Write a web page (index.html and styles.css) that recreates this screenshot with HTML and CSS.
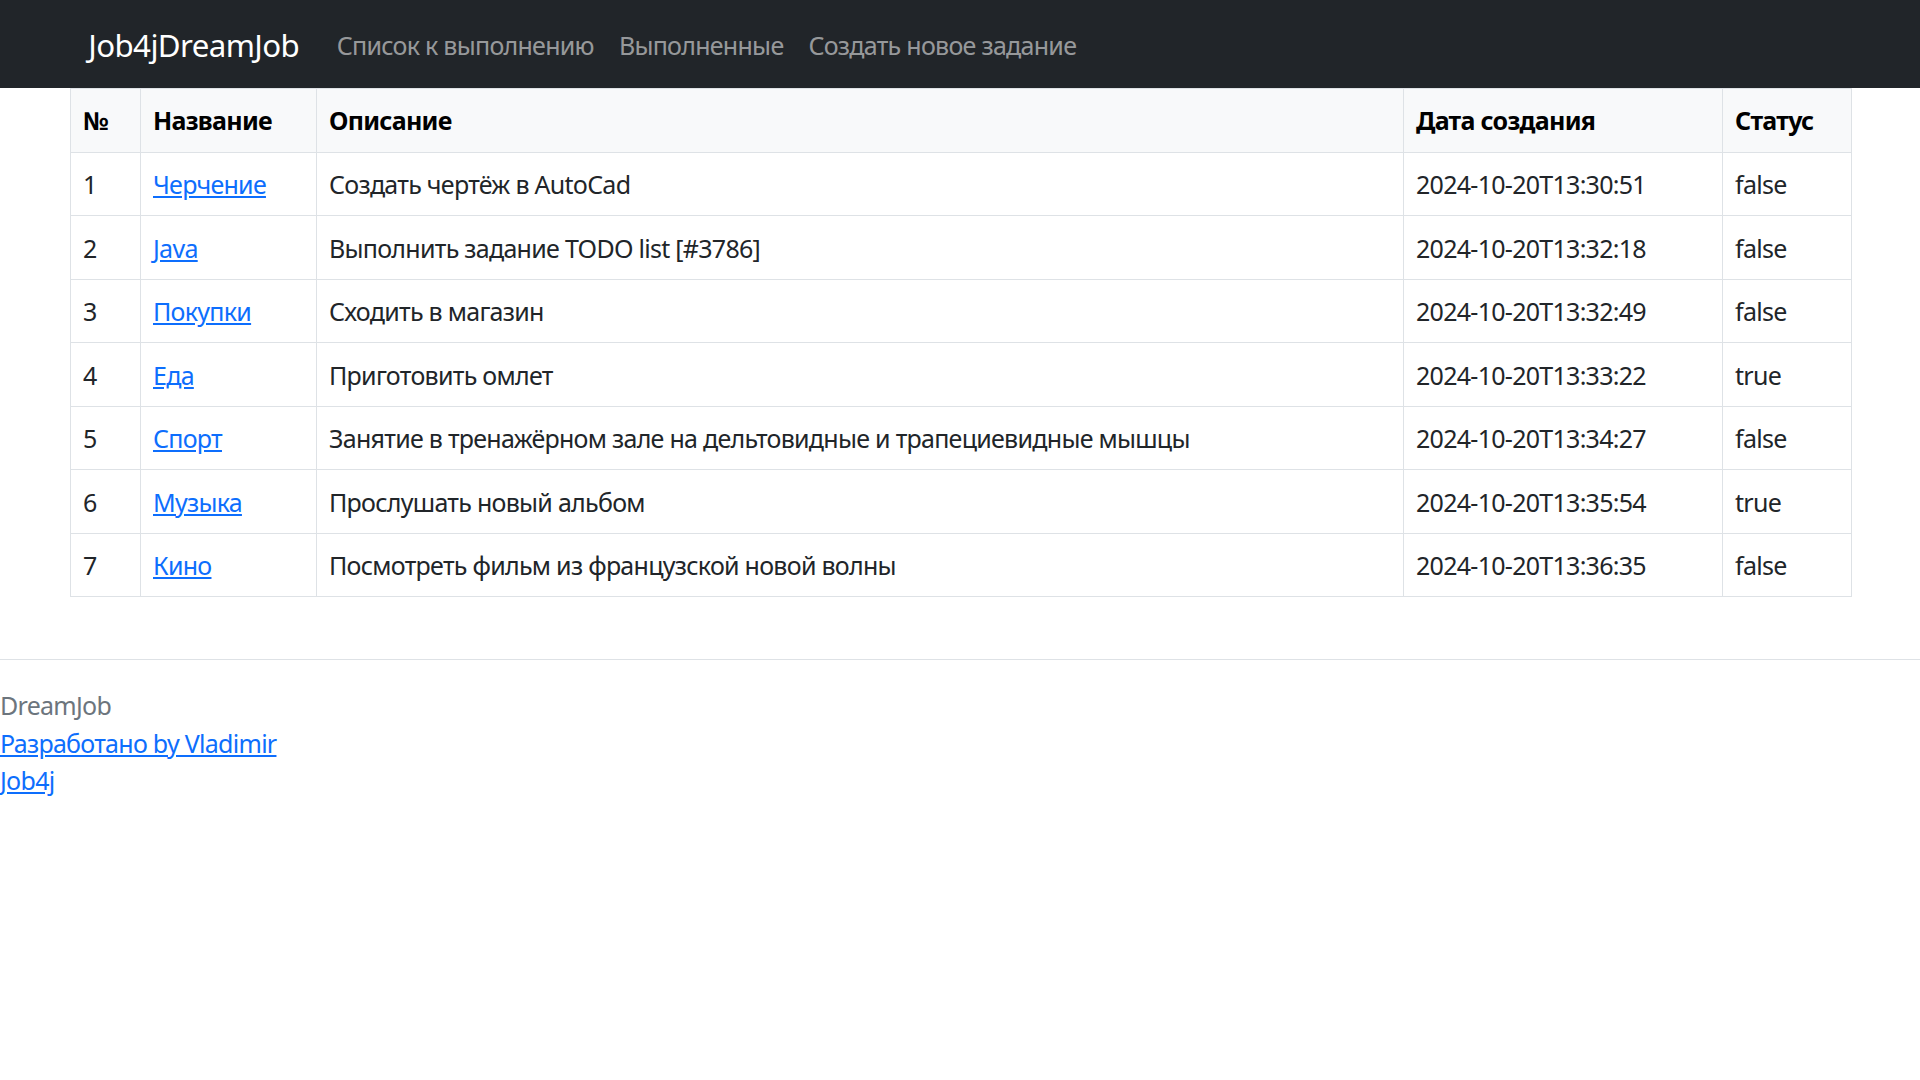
FILE: index.html
```html
<!DOCTYPE html>
<html lang="ru">
<head>
<meta charset="utf-8">
<title>Job4jDreamJob</title>
<link rel="stylesheet" href="styles.css">
</head>
<body>
<nav class="navbar">
  <div class="nav-container">
    <a class="brand" href="#">Job4jDreamJob</a>
    <div class="nav-links">
      <a class="nav-link" href="#">Список к выполнению</a>
      <a class="nav-link" href="#">Выполненные</a>
      <a class="nav-link" href="#">Создать новое задание</a>
    </div>
  </div>
</nav>
<main class="container">
  <table class="table">
    <colgroup>
      <col class="c-num"><col class="c-name"><col class="c-desc"><col class="c-date"><col class="c-status">
    </colgroup>
    <thead>
      <tr><th>№</th><th>Название</th><th>Описание</th><th>Дата создания</th><th>Статус</th></tr>
    </thead>
    <tbody>
      <tr><td>1</td><td><a href="#">Черчение</a></td><td>Создать чертёж в AutoCad</td><td>2024-10-20T13:30:51</td><td>false</td></tr>
      <tr><td>2</td><td><a href="#">Java</a></td><td>Выполнить задание TODO list [#3786]</td><td>2024-10-20T13:32:18</td><td>false</td></tr>
      <tr><td>3</td><td><a href="#">Покупки</a></td><td>Сходить в магазин</td><td>2024-10-20T13:32:49</td><td>false</td></tr>
      <tr><td>4</td><td><a href="#">Еда</a></td><td>Приготовить омлет</td><td>2024-10-20T13:33:22</td><td>true</td></tr>
      <tr><td>5</td><td><a href="#">Спорт</a></td><td>Занятие в тренажёрном зале на дельтовидные и трапециевидные мышцы</td><td>2024-10-20T13:34:27</td><td>false</td></tr>
      <tr><td>6</td><td><a href="#">Музыка</a></td><td>Прослушать новый альбом</td><td>2024-10-20T13:35:54</td><td>true</td></tr>
      <tr><td>7</td><td><a href="#">Кино</a></td><td>Посмотреть фильм из французской новой волны</td><td>2024-10-20T13:36:35</td><td>false</td></tr>
    </tbody>
  </table>
</main>
<footer class="footer">
  <div class="footer-muted">DreamJob</div>
  <div><a href="#">Разработано by Vladimir</a></div>
  <div><a href="#">Job4j</a></div>
</footer>
</body>
</html>
```
FILE: styles.css
```css
html, body {
  margin: 0;
  padding: 0;
}
body {
  font-family: "Noto Sans", "Open Sans", "DejaVu Sans", sans-serif;
  font-size: 25px;
  line-height: 37.5px;
  letter-spacing: -0.72px;
  color: #212529;
  background: #fff;
}
a {
  color: #0d6efd;
  text-decoration: underline;
}
.navbar {
  background: #212529;
  height: 88px;
  display: flex;
  align-items: center;
}
.nav-container {
  width: 1781px;
  margin: 0 auto;
  padding: 4px 18.75px 0;
  box-sizing: border-box;
  display: flex;
  align-items: center;
}
.brand {
  color: #fff;
  text-decoration: none;
  font-size: 31.25px;
  letter-spacing: -0.6px;
  margin-right: 25px;
  white-space: nowrap;
}
.nav-links {
  display: flex;
}
.nav-link {
  color: rgba(255, 255, 255, 0.55);
  text-decoration: none;
  padding: 0 12.5px;
  white-space: nowrap;
}
.container {
  width: 1781px;
  margin: 0 auto;
  padding-bottom: 62px;
}
.table {
  width: 100%;
  border-collapse: collapse;
  table-layout: fixed;
}
.c-num { width: 70px; }
.c-name { width: 176px; }
.c-desc { width: 1087px; }
.c-date { width: 319px; }
.c-status { width: 129px; }
.table th, .table td {
  border: 1px solid #dee2e6;
  padding: 12.5px 12.5px;
  text-align: left;
  vertical-align: top;
  white-space: nowrap;
}
.table td {
  padding-top: 13.5px;
  padding-bottom: 11.5px;
}
.table thead th {
  background: #f8f9fa;
  color: #000;
  font-weight: 700;
}
.footer {
  border-top: 1px solid #dee2e6;
  padding-top: 27px;
}
.footer-muted {
  color: #6c757d;
}
```
